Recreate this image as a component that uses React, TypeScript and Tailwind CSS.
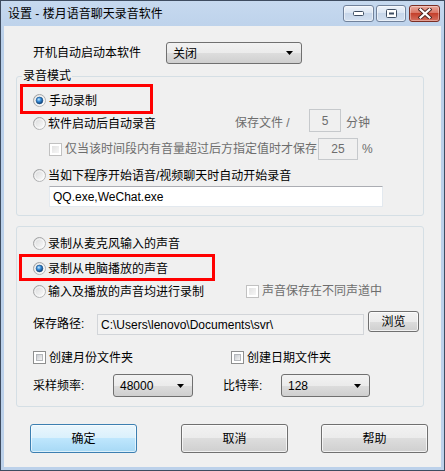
import React from "react";

const FONT = "font-['Liberation_Sans','Noto_Sans_CJK_SC',sans-serif]";

function Radio({ checked = false }: { checked?: boolean }) {
  return (
    <svg width="13" height="13" viewBox="0 0 13 13" className="shrink-0">
      <defs>
        <linearGradient id="rRing" x1="0" y1="0" x2="1" y2="1">
          <stop offset="0" stopColor="#9a9b9c" />
          <stop offset="1" stopColor="#bcbdbe" />
        </linearGradient>
        <linearGradient id="rFill" x1="0" y1="0" x2="1" y2="1">
          <stop offset="0" stopColor="#d6d7d8" />
          <stop offset="1" stopColor="#ffffff" />
        </linearGradient>
        <radialGradient id="rDot" cx="0.4" cy="0.35" r="0.65">
          <stop offset="0" stopColor="#c8e9ff" />
          <stop offset="0.45" stopColor="#3a8fda" />
          <stop offset="1" stopColor="#0d3c70" />
        </radialGradient>
      </defs>
      <circle cx="6.5" cy="6.5" r="6" fill="url(#rFill)" stroke="url(#rRing)" strokeWidth="1" />
      <circle cx="6.5" cy="6.5" r="4.5" fill="none" stroke="#ffffff" strokeOpacity="0.7" strokeWidth="0.8" />
      {checked && <circle cx="6.5" cy="6.5" r="3.4" fill="url(#rDot)" stroke="#1b4f86" strokeWidth="0.6" />}
    </svg>
  );
}

function CheckBox({ disabled = false }: { disabled?: boolean }) {
  return (
    <span
      className={`shrink-0 w-[13px] h-[13px] border p-[2px] bg-white ${
        disabled ? "border-[#c1c1c1] bg-[#f4f4f4]" : "border-[#8e8f8f]"
      }`}
    >
      <span
        className={`block w-full h-full ${
          disabled
            ? "bg-[linear-gradient(135deg,#e2e2e2,#f6f6f6)]"
            : "bg-[linear-gradient(135deg,#c9ccd1,#f4f4f4)] border border-[#b4b7bb]"
        }`}
      />
    </span>
  );
}

function Combo({ value, w, h = "h-[23px]" }: { value: string; w: string; h?: string }) {
  return (
    <div
      className={`${w} ${h} shrink-0 flex items-center pl-[6px] pr-[8px] rounded-[3px] border border-[#707070] bg-[linear-gradient(#f2f2f2,#ebebeb_50%,#dddddd_50%,#cfcfcf)] text-black`}
    >
      <span className="flex-1 pt-[1px]">{value}</span>
      <svg width="7" height="4" viewBox="0 0 7 4">
        <path d="M0 0H7L3.5 4Z" fill="#000" />
      </svg>
    </div>
  );
}

function Button({ label, w, primary = false }: { label: string; w: string; primary?: boolean }) {
  return (
    <div
      className={`${w} shrink-0 flex items-center justify-center rounded-[3px] border ${
        primary
          ? "border-[#3c7fb1] bg-[linear-gradient(#eaf6fd,#d9f0fc_50%,#bee6fd_50%,#a7d9f5)] shadow-[inset_0_0_0_1px_rgba(255,255,255,0.6)]"
          : "border-[#707070] bg-[linear-gradient(#f2f2f2,#ebebeb_50%,#dddddd_50%,#cfcfcf)] shadow-[inset_0_0_0_1px_rgba(255,255,255,0.7)]"
      }`}
    >
      {label}
    </div>
  );
}

function RedMark({ className }: { className: string }) {
  return <span className={`absolute border-[3px] border-[#ff0000] pointer-events-none ${className}`} />;
}

export default function App() {
  const gray = "text-[#6d6d6d]";
  return (
    <div className={`${FONT} text-[12px] leading-none text-black w-[445px] h-[471px] flex flex-col border border-[#3e4c60] bg-[linear-gradient(#c6d9ef,#b9cfe9_40px,#bcd1ea)]`}>
      {/* Title bar */}
      <div className="h-[25px] shrink-0 flex items-start pl-[7px] pr-[4px]">
        <span className="mt-[7px] text-[12px] text-black">设置 - 楼月语音聊天录音软件</span>
        <div className="ml-auto mt-[4px] flex items-center">
          <div className="w-[31px] h-[17px] rounded-[3px] border border-[#71829b] bg-[linear-gradient(#eef3fa,#d9e4f2_50%,#c7d6ea_50%,#d3e0f0)] flex items-center justify-center shadow-[inset_0_0_0_1px_rgba(255,255,255,0.5)]">
            <svg width="11" height="5" viewBox="0 0 11 5">
              <rect x="0.5" y="0.5" width="10" height="4" rx="1" fill="#fff" stroke="#3f4e63" />
            </svg>
          </div>
          <div className="w-[30px] h-[17px] ml-[2px] rounded-[3px] border border-[#71829b] bg-[linear-gradient(#eef3fa,#d9e4f2_50%,#c7d6ea_50%,#d3e0f0)] flex items-center justify-center shadow-[inset_0_0_0_1px_rgba(255,255,255,0.5)]">
            <svg width="11" height="9" viewBox="0 0 11 9">
              <rect x="0.5" y="0.5" width="10" height="8" rx="1" fill="#fff" stroke="#3f4e63" />
              <rect x="3" y="3.5" width="5" height="2" fill="#3f4e63" />
            </svg>
          </div>
          <div className="w-[31px] h-[17px] ml-[3px] rounded-[3px] border border-[#7b2e24] bg-[linear-gradient(#eaa99c,#d8705f_50%,#c4402c_50%,#d57060)] flex items-center justify-center shadow-[inset_0_0_0_1px_rgba(255,255,255,0.35)]">
            <svg width="14" height="11" viewBox="0 0 14 11">
              <path d="M2.5 1.5L11.5 9.5M11.5 1.5L2.5 9.5" stroke="#4a2420" strokeWidth="4" strokeLinecap="square" />
              <path d="M2.5 1.5L11.5 9.5M11.5 1.5L2.5 9.5" stroke="#ffffff" strokeWidth="2.2" strokeLinecap="square" />
            </svg>
          </div>
        </div>
      </div>

      {/* Client area */}
      <div className="flex-1 mx-[3px] mb-[3px] bg-[#f0f0f0] flex flex-col">
        <div className="mt-[16px] h-[22px] flex items-center">
          <span className="ml-[29px] w-[133px]">开机自动启动本软件</span>
          <Combo value="关闭" w="w-[136px]" h="h-[22px]" />
        </div>

        <fieldset className="mt-[4px] ml-[12px] w-[408px] border border-[#d5dfe5] rounded-[3px] pb-[8px]">
          <legend className="ml-[5px] px-[1px] leading-[16px]">录音模式</legend>
          <div className="pl-[16px]">
            <div className="pt-[4px] h-[28px] flex items-end">
              <div className="relative h-[24px] flex items-center gap-[3px]">
                <RedMark className="-left-[13px] -top-[4px] w-[133px] h-[30px]" />
                <Radio checked />
                <span className="pt-[1px]">手动录制</span>
              </div>
            </div>
            <div className="h-[22px] flex items-center">
              <div className="w-[202px] flex items-center gap-[2px]">
                <Radio />
                <span className="pt-[1px]">软件启动后自动录音</span>
              </div>
              <span className={`w-[74px] ${gray}`}>保存文件 /</span>
              <div className={`-mt-[5px] w-[32px] h-[23px] shrink-0 border border-[#c6c9cc] flex items-center justify-center ${gray}`}>5</div>
              <span className={`ml-[5px] ${gray}`}>分钟</span>
            </div>
            <div className="mt-[2px] h-[26px] flex items-center">
              <div className="ml-[16px] w-[269px] flex items-center gap-[3px]">
                <CheckBox disabled />
                <span className={gray}>仅当该时间段内有音量超过后方指定值时才保存</span>
              </div>
              <div className={`w-[40px] h-[22px] shrink-0 border border-[#c6c9cc] flex items-center justify-center ${gray}`}>25</div>
              <span className={`ml-[4px] ${gray}`}>%</span>
            </div>
            <div className="mt-[3px] h-[21px] flex items-center gap-[2px]">
              <Radio />
              <span className="pt-[1px]">当如下程序开始语音/视频聊天时自动开始录音</span>
            </div>
            <div className="ml-[16px] w-[334px] h-[21px] bg-white border border-[#e3e9ef] border-t-[#abadb3] flex items-center pl-[3px]">
              QQ.exe,WeChat.exe
            </div>
          </div>
        </fieldset>

        <div className="mt-[10px] ml-[12px] w-[408px] border border-[#d5dfe5] rounded-[3px] pl-[16px] pt-[5px] pb-[9px]">
          <div className="h-[22px] flex items-center gap-[2px]">
            <Radio />
            <span className="pt-[1px]">录制从麦克风输入的声音</span>
          </div>
          <div className="mt-[2px] h-[24px] flex items-center">
            <div className="relative h-[24px] flex items-center gap-[2px]">
              <RedMark className="-left-[14px] -top-[2px] w-[196px] h-[27px]" />
              <Radio checked />
              <span className="pt-[1px]">录制从电脑播放的声音</span>
            </div>
          </div>
          <div className="h-[22px] flex items-center">
            <div className="w-[213px] flex items-center gap-[2px]">
              <Radio />
              <span className="pt-[1px]">输入及播放的声音均进行录制</span>
            </div>
            <CheckBox disabled />
            <span className={`ml-[3px] ${gray}`}>声音保存在不同声道中</span>
          </div>
          <div className="mt-[10px] h-[24px] flex items-center">
            <span className="w-[64px]">保存路径:</span>
            <div className="w-[267px] h-[21px] shrink-0 border border-[#d2d5d9] bg-[#f2f2f2] flex items-center pl-[3px] pt-[1px]">
              C:\Users\lenovo\Documents\svr\
            </div>
            <Button label="浏览" w="w-[51px] h-[21px] ml-[4px] -mt-[5px]" />
          </div>
          <div className="mt-[10px] h-[23px] flex items-center">
            <div className="w-[198px] flex items-center gap-[3px]">
              <CheckBox />
              <span>创建月份文件夹</span>
            </div>
            <CheckBox />
            <span className="ml-[3px]">创建日期文件夹</span>
          </div>
          <div className="mt-[5px] h-[23px] flex items-center">
            <span className="w-[80px]">采样频率:</span>
            <Combo value="48000" w="w-[80px]" />
            <span className="ml-[30px] w-[58px]">比特率:</span>
            <Combo value="128" w="w-[89px]" />
          </div>
        </div>

        <div className="mt-[17px] h-[29px] flex">
          <Button label="确定" w="w-[107px] ml-[26px]" primary />
          <Button label="取消" w="w-[107px] ml-[44px]" />
          <Button label="帮助" w="w-[107px] ml-[33px]" />
        </div>
      </div>
    </div>
  );
}
